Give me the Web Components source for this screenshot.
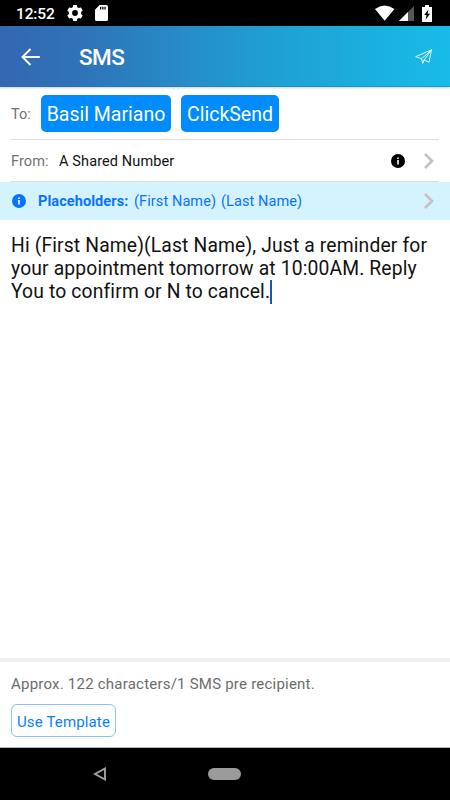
<!DOCTYPE html>
<html lang="en"><head><meta charset="utf-8"><title>SMS</title>
<style>
html,body{margin:0;height:100%;background:#fff}
body{font-family:Roboto,"Liberation Sans",sans-serif;color:#111}
</style></head><body>
<sms-screen></sms-screen>
<script>
function define(name, html) {
  const t = document.createElement('template');
  t.innerHTML = html;
  customElements.define(name, class extends HTMLElement {
    constructor() {
      super();
      this.attachShadow({mode: 'open'}).append(t.content.cloneNode(true));
    }
  });
}

define('status-bar', `<style>
:host{display:flex;align-items:center;height:26px;background:#000;color:#fff;box-sizing:border-box;padding:0 18px 0 16px}
time{font-size:15.500px;font-weight:500;line-height:26px;letter-spacing:-.15px;width:51px;padding-top:1px;box-sizing:border-box;height:26px}
svg{display:block;fill:#fff}
.gap{flex:1}
</style>
<time>12:52</time>
<svg width="16" height="18" viewBox="0 0 16 18" style="margin-right:12px"><path fill-rule="evenodd" d="M6.2 1h3.6l.5 2.2 1.5.9 2.1-.7 1.8 3.1-1.6 1.5v2l1.6 1.5-1.8 3.1-2.1-.7-1.5.9-.5 2.2H6.200l-.5-2.200-1.500-.9-2.100.7L.3 11.500 1.900 10V8L.3 6.500l1.800-3.100 2.100.7 1.500-.9zM8 6.100a2.900 2.900 0 1 0 0 5.800 2.900 2.900 0 1 0 0-5.800z"/></svg>
<svg width="13" height="16" viewBox="0 0 13 16"><path fill-rule="evenodd" d="M4.500 0H11.500Q13 0 13 1.500V14.500Q13 16 11.500 16H1.500Q0 16 0 14.500V4.700zM5 1.800v2.800h1.300V1.800zM7.200 1.800v2.800h1.300V1.800zM9.400 1.800v2.800h1.300V1.800z"/></svg>
<span class="gap"></span>
<svg width="20" height="16" viewBox="0 0 20 16" style="margin-right:4px"><path d="M0 4Q9.700-3 19.400 4L9.700 15.700z"/></svg>
<svg width="15" height="15" viewBox="0 0 15 15" style="margin-right:8px"><path d="M15 0V15H0z" fill="#555"/><path d="M9 6V15H0z"/></svg>
<svg width="10" height="17" viewBox="0 0 10 17"><path fill-rule="evenodd" d="M3 0h4v2h3v15H0V2h3zM6.500 4.500 2.200 10h2.300l-.7 4.500L8 8.800H5.600z"/></svg>`);

define('app-header', `<style>
:host{display:flex;align-items:center;height:61px;box-sizing:border-box;color:#fff;padding:0 17px 0 21px;background:linear-gradient(90deg,#3367b1 0%,#2f73b8 18%,#219bd0 55%,#17bce8 100%);box-shadow:inset 0 -1px #087bc366,0 1px 2px #0003}
svg{display:block;fill:none;stroke:#fff}
h1{margin:0 0 0 38px;font-size:22.500px;font-weight:500;letter-spacing:-.5px;line-height:30px;flex:1;padding-top:1px}
</style>
<svg width="20" height="18" viewBox="0 0 20 18" stroke-width="1.900"><path d="M18.800 9H2M9.500 1 1.500 9l8 8"/></svg>
<h1><slot></slot></h1>
<svg width="18" height="16" viewBox="0 0 18 16" stroke-width=".85" stroke-linejoin="round"><path d="M.7 7.700 16.600.7 14 13.300 9.200 11 7.600 14.300 6.600 9.800zM6.600 9.800 16.600.7 9.200 11M7.600 14.300l1.600-3.300"/></svg>`);

define('info-icon', `<style>:host{display:block;width:14px;height:14px}svg{display:block}</style>
<svg width="14" height="14" viewBox="0 0 14 14"><circle cx="7" cy="7" r="7" fill="currentColor"/><path fill="#fff" d="M6.200 3.400h1.600v1.500H6.200zM6.200 5.900h1.600v4.700H6.200z"/></svg>`);
define('chevron-icon', `<style>:host{display:block;width:10px;height:16px}svg{display:block}</style>
<svg width="10" height="16" viewBox="0 0 10 16"><path d="M1 1 8 8l-7 7" fill="none" stroke="#c2c2c7" stroke-width="2.700"/></svg>`);
define('contact-chip', `<style>:host{display:flex;justify-content:center;align-items:center;box-sizing:border-box;height:37px;border-radius:5px;background:#008cff;color:#fff;font-size:19.500px;letter-spacing:0;white-space:nowrap;padding-top:2px}</style><slot></slot>`);
define('form-row', `<style>
:host{display:flex;align-items:center;box-sizing:border-box;margin:0 11px;border-bottom:1px solid #ddd;font-size:14.500px;white-space:nowrap}
</style><slot></slot>`);
define('placeholder-bar', `<style>
:host{display:flex;align-items:center;height:38px;box-sizing:border-box;background:#d5f2ff;color:#0873ff;padding:0 16px 0 12px;font-size:14.500px;white-space:nowrap}
b{margin-left:12px;width:96px;font-weight:700;letter-spacing:.08px}
span,b{padding-top:1px}
.n{letter-spacing:.1px;width:87px}.l{flex:1}
</style><info-icon></info-icon><b>Placeholders:</b><span class="n">(First Name)</span><span class="n l">(Last Name)</span><chevron-icon></chevron-icon>`);
define('message-editor', `<style>
:host{display:block;flex:1;box-sizing:border-box;padding:14px 11px;font-size:19.300px;line-height:23px;letter-spacing:.15px;white-space:nowrap;color:#111}
div{height:23px}
i{display:inline-block;width:2px;height:24px;background:#1b55b8;vertical-align:top}
</style><div>Hi (First Name)(Last Name), Just a reminder for</div><div>your appointment tomorrow at 10:00AM. Reply</div><div>You to confirm or N to cancel.<i></i></div>`);
define('message-footer', `<style>
:host{display:flex;flex-direction:column;align-items:flex-start;box-sizing:border-box;height:90px;border-top:4px solid #efeff4;border-bottom:1px solid #b5b5b5;padding:12px 11px 0}
p{margin:0 0 10px;font-size:15px;line-height:20px;letter-spacing:.22px;color:#6c6c6c;white-space:nowrap}
button{font:15px Roboto,sans-serif;letter-spacing:.15px;color:#087fff;background:#fff;border:1px solid #8bc0ff;border-radius:6px;width:105px;height:33px;padding:2px 0 0;white-space:nowrap}
</style><p>Approx. 122 characters/1 SMS pre recipient.</p><button>Use Template</button>`);
define('nav-bar', `<style>
:host{display:flex;align-items:center;height:52px;background:#000;padding-left:93px}
svg{display:block}
span{width:33px;height:12px;border-radius:6px;background:#9b9b9b;margin-left:101px}
</style><svg width="14" height="14" viewBox="0 0 14 14"><path d="M12 1.500v11L2 7z" fill="none" stroke="#a0a0a0" stroke-width="1.900"/></svg><span></span>`);
define('sms-screen', `<style>
:host{display:flex;flex-direction:column;width:450px;height:800px;background:#fff;overflow:hidden}
app-header{position:relative}
.to{height:53px}.from{height:42px}
label{color:#707070}
label,.from span{padding-top:2px}
.to label{width:30px}
.from label{width:48px;letter-spacing:.1px}
.from span{flex:1;letter-spacing:.12px}
.from info-icon{margin-right:19px;color:#000}
.from chevron-icon{margin-right:5px}
</style>
<status-bar></status-bar><app-header>SMS</app-header>
<form-row class="to"><label>To:</label><contact-chip style="width:130px;margin-right:10px">Basil Mariano</contact-chip><contact-chip style="width:98px">ClickSend</contact-chip></form-row>
<form-row class="from"><label>From:</label><span>A Shared Number</span><info-icon></info-icon><chevron-icon></chevron-icon></form-row>
<placeholder-bar></placeholder-bar><message-editor></message-editor><message-footer></message-footer><nav-bar></nav-bar>`);
</script></body></html>
